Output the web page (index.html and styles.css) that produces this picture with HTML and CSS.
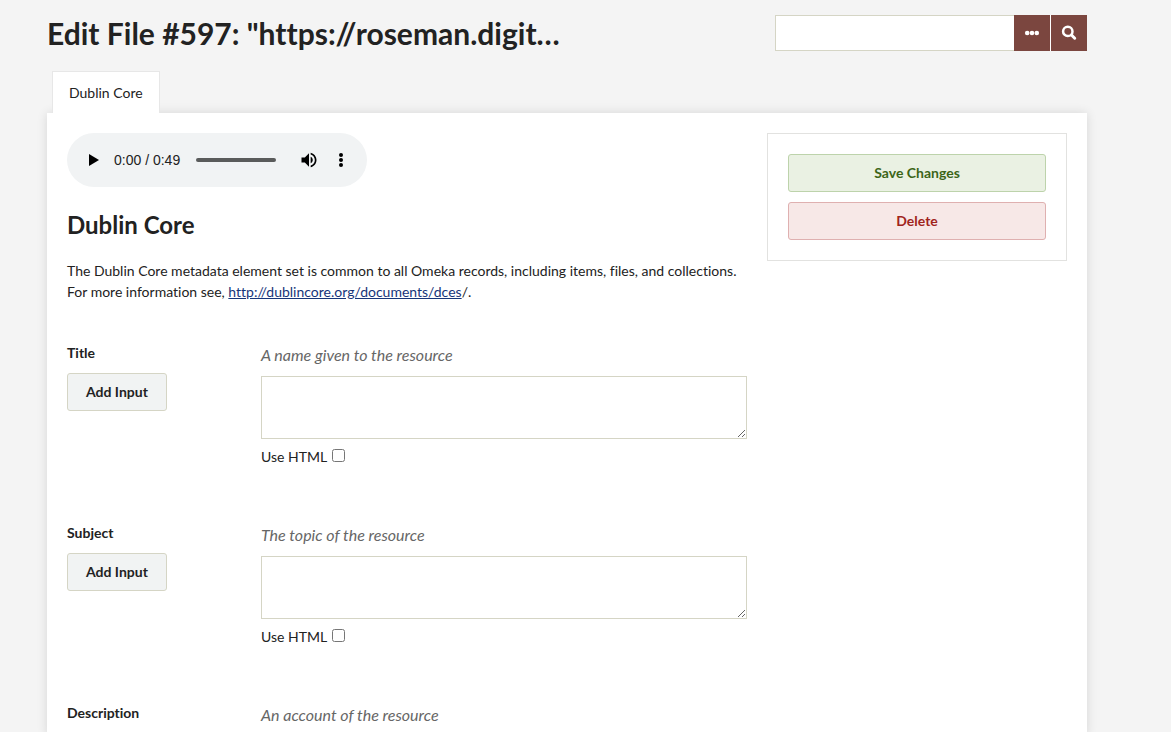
FILE: index.html
```html
<!DOCTYPE html>
<html lang="en">
<head>
<meta charset="utf-8">
<title>Edit File #597</title>
<meta name="viewport" content="width=device-width, initial-scale=1">
<link rel="stylesheet" href="styles.css">
</head>
<body>
<div class="page">
  <header class="page-header">
    <h1 class="page-title">Edit File #597: "https://roseman.digit…</h1>
    <form class="search" role="search">
      <input class="search-input" type="text" aria-label="Search">
      <button class="search-button" type="button" aria-label="Search options">
        <svg class="search-icon" viewBox="0 0 16 16" aria-hidden="true"><circle cx="3.200" cy="8" r="2.300"/><circle cx="8" cy="8" r="2.300"/><circle cx="12.800" cy="8" r="2.300"/></svg>
      </button>
      <button class="search-button" type="submit" aria-label="Submit search">
        <svg class="search-icon" viewBox="0 0 16 16" aria-hidden="true"><circle cx="6.800" cy="6.400" r="4.700" fill="none" stroke="currentColor" stroke-width="2.500"/><path d="M10.500 10L13.700 13.200" stroke="currentColor" stroke-width="3" stroke-linecap="round"/></svg>
      </button>
    </form>
  </header>
  <nav class="tabs"><a class="tab" href="#dublin-core">Dublin Core</a></nav>
  <form class="panel">
    <main class="main" id="dublin-core">
      <div class="player">
        <button class="player-button play" type="button" aria-label="Play">
          <svg class="player-icon" viewBox="0 0 20 20" aria-hidden="true"><path d="M6 4v12l10-6z"/></svg>
        </button>
        <span class="player-time">0:00 / 0:49</span>
        <span class="player-track"></span>
        <button class="player-button volume" type="button" aria-label="Mute">
          <svg class="player-icon" viewBox="0 0 24 24" aria-hidden="true"><path d="M3 9v6h4l5 5V4L7 9H3zm13.500 3c0-1.770-1.020-3.290-2.500-4.030v8.050c1.480-.73 2.500-2.250 2.500-4.020zM14 3.230v2.060c2.890.86 5 3.540 5 6.710s-2.110 5.850-5 6.710v2.060c4.010-.91 7-4.490 7-8.770s-2.990-7.860-7-8.770z"/></svg>
        </button>
        <button class="player-button" type="button" aria-label="More options">
          <svg class="player-icon" viewBox="0 0 20 20" aria-hidden="true"><circle cx="10" cy="5" r="2"/><circle cx="10" cy="10" r="2"/><circle cx="10" cy="15" r="2"/></svg>
        </button>
      </div>
      <h2 class="section-title">Dublin Core</h2>
      <p class="section-text">The Dublin Core metadata element set is common to all Omeka records, including items, files, and collections. For more information see, <a class="link" href="#dces">http://dublincore.org/documents/dces</a>/.</p>
      <div class="field">
        <div class="field-side">
          <label class="field-label" for="title">Title</label>
          <button class="button" type="button">Add Input</button>
        </div>
        <div class="field-body">
          <p class="field-hint">A name given to the resource</p>
          <textarea class="field-input" id="title"></textarea>
          <label class="html-option">Use HTML <input class="html-check" type="checkbox"></label>
        </div>
      </div>
      <div class="field">
        <div class="field-side">
          <label class="field-label" for="subject">Subject</label>
          <button class="button" type="button">Add Input</button>
        </div>
        <div class="field-body">
          <p class="field-hint">The topic of the resource</p>
          <textarea class="field-input" id="subject"></textarea>
          <label class="html-option">Use HTML <input class="html-check" type="checkbox"></label>
        </div>
      </div>
      <div class="field">
        <div class="field-side"><span class="field-label">Description</span></div>
        <div class="field-body"><p class="field-hint">An account of the resource</p></div>
      </div>
    </main>
    <aside class="actions">
      <button class="button save" type="submit">Save Changes</button>
      <button class="button delete" type="button">Delete</button>
    </aside>
  </form>
</div>
</body>
</html>
```

FILE: styles.css
```css
* {
  box-sizing: border-box;
}

body {
  margin: 0;
  background: #f4f4f4;
  color: #222;
  font: 14px/21px Lato, sans-serif;
  font-variant-ligatures: no-common-ligatures;
}

.page {
  display: flex;
  flex-direction: column;
  min-height: 100vh;
  padding: 15px 84px 0 47px;
}

.page-header {
  display: flex;
  justify-content: space-between;
  align-items: flex-start;
  gap: 20px;
  margin-bottom: 20px;
}

.page-title {
  margin: 0;
  font-size: 30px;
  line-height: 36px;
}

.search {
  display: flex;
  width: 312px;
}

.search-input {
  flex: 1;
  min-width: 0;
  height: 36px;
  border: 1px solid #d5d5c5;
  border-right: 0;
  border-radius: 0;
  background: #fff;
}

.search-button {
  display: grid;
  place-items: center;
  width: 36px;
  height: 36px;
  padding: 0;
  border: 0;
  background: #7b463f;
  color: #fff;
}

.search-button + .search-button {
  width: 37px;
  border-left: 1px solid #fff;
}

.search-icon {
  width: 16px;
  height: 16px;
  fill: currentColor;
}

.tabs {
  display: flex;
  padding-left: 5px;
}

.tab {
  position: relative;
  padding: 11px 16px 10px;
  border: 1px solid #e7e7e7;
  border-width: 1px 1px 0;
  background: #fff;
  color: #222;
  line-height: 20px;
  text-decoration: none;
}

.panel {
  display: flex;
  flex: 1;
  align-items: flex-start;
  gap: 20px;
  padding: 20px 20px 0;
  background: #fff;
  box-shadow: 0 0 10px rgba(0, 0, 0, 0.12);
}

.main {
  flex: 1;
  min-width: 0;
}

.player {
  display: flex;
  align-items: center;
  width: 300px;
  height: 54px;
  padding: 0 16px;
  border-radius: 27px;
  background: #f1f3f4;
}

.player-button {
  display: grid;
  place-items: center;
  width: 20px;
  height: 32px;
  padding: 0;
  border: 0;
  background: none;
  color: #000;
}

.player-icon {
  width: 20px;
  height: 20px;
  fill: currentColor;
}

.player-time {
  margin-left: 11px;
  font-family: "Liberation Sans", Arial, sans-serif;
  white-space: nowrap;
}

.player-track {
  flex: 1;
  height: 4px;
  margin: 0 23px 0 16px;
  border-radius: 2px;
  background: #5a5b5b;
}

.volume {
  margin-right: 12px;
}

.section-title {
  margin: 20px 0 17px;
  font-size: 24px;
  line-height: 36px;
}

.section-text {
  margin: 0 0 40px;
}

.link {
  color: #17357a;
}

.field {
  display: flex;
  min-height: 180px;
  padding-top: 1px;
}

.field:last-child {
  min-height: 0;
}

.field-side {
  display: flex;
  flex-direction: column;
  align-items: flex-start;
  gap: 10px;
  width: 194px;
}

.field-label {
  font-weight: bold;
  line-height: 20px;
}

.button {
  height: 38px;
  padding: 0 18px;
  border: 1px solid #d5d5c5;
  border-radius: 3px;
  background: #f1f3f3;
  color: #222;
  font: bold 14px/20px Lato, sans-serif;
}

.field-body {
  flex: 1;
  min-width: 0;
}

.field-hint {
  margin: 0 0 9px;
  color: #666;
  font-size: 16px;
  font-style: italic;
  line-height: 24px;
}

.field-input {
  display: block;
  width: 100%;
  height: 63px;
  border: 1px solid #d5d5c5;
  background: #fff;
}

.html-option {
  display: flex;
  align-items: center;
  gap: 5px;
  width: fit-content;
  margin-top: 7px;
}

.html-check {
  width: 13px;
  height: 13px;
  margin: 0 0 3px;
}

.actions {
  display: flex;
  flex-direction: column;
  gap: 10px;
  width: 300px;
  padding: 20px;
  border: 1px solid #e2e2e0;
}

.save {
  border-color: #bdd3ab;
  background: #eaf1e3;
  color: #3c6518;
}

.delete {
  border-color: #dfb0b0;
  background: #f7e8e7;
  color: #a0241c;
}
```
